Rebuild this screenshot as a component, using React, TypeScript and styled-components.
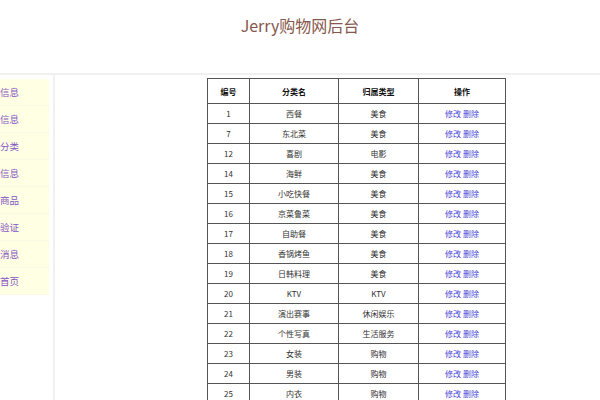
import styled, { createGlobalStyle } from "styled-components";

const GlobalStyle = createGlobalStyle`
  html, body {
    margin: 0;
    padding: 0;
    background: #fff;
    overflow: hidden;
  }
  body {
    font-family: "Noto Sans CJK SC", "Noto Sans", sans-serif;
  }
`;

const MENU = [
  "用户信息",
  "商家信息",
  "商品分类",
  "订单信息",
  "审核商品",
  "实名验证",
  "系统消息",
  "返回首页",
];

const ROWS: [number, string, string][] = [
  [1, "西餐", "美食"],
  [7, "东北菜", "美食"],
  [12, "喜剧", "电影"],
  [14, "海鲜", "美食"],
  [15, "小吃快餐", "美食"],
  [16, "京菜鲁菜", "美食"],
  [17, "自助餐", "美食"],
  [18, "香锅烤鱼", "美食"],
  [19, "日韩料理", "美食"],
  [20, "KTV", "KTV"],
  [21, "演出赛事", "休闲娱乐"],
  [22, "个性写真", "生活服务"],
  [23, "女装", "购物"],
  [24, "男装", "购物"],
  [25, "内衣", "购物"],
];

const COLS = [
  { title: "编号", width: 42 },
  { title: "分类名", width: 89 },
  { title: "归属类型", width: 80 },
  { title: "操作", width: 87 },
];

export default function App() {
  return (
    <Page>
      <GlobalStyle />
      <Header>
        <Title>Jerry购物网后台</Title>
      </Header>
      <Body>
        <Sidebar>
          {MENU.map((m) => (
            <MenuItem key={m}>{m}</MenuItem>
          ))}
        </Sidebar>
        <Main>
          <Table>
            <colgroup>
              {COLS.map((c) => (
                <col key={c.title} style={{ width: c.width }} />
              ))}
            </colgroup>
            <thead>
              <tr>
                {COLS.map((c) => (
                  <Th key={c.title}>{c.title}</Th>
                ))}
              </tr>
            </thead>
            <tbody>
              {ROWS.map(([id, name, type]) => (
                <tr key={id}>
                  <Td>{id}</Td>
                  <Td>{name}</Td>
                  <Td>{type}</Td>
                  <Td>
                    <Action href="#">修改</Action> <Action href="#">删除</Action>
                  </Td>
                </tr>
              ))}
            </tbody>
          </Table>
        </Main>
      </Body>
    </Page>
  );
}

const Page = styled.div`
  width: 600px;
  height: 400px;
  overflow: hidden;
`;

const Header = styled.div`
  height: 73px;
  display: flex;
  justify-content: center;
  align-items: flex-start;
`;

const Title = styled.h1`
  margin: 14px 0 0;
  font-size: 16px;
  font-weight: normal;
  color: #86584c;
  line-height: 22px;
`;

const Body = styled.div`
  display: flex;
  border-top: 2px solid #f0f0f0;
  height: 327px;
`;

const Sidebar = styled.div`
  width: 53px;
  flex: none;
  border-right: 2px solid #f0f0f0;
  padding-top: 4px;
  overflow: hidden;
`;

const MenuItem = styled.div`
  width: 49px;
  height: 26px;
  border-bottom: 1px solid #fbf9e6;
  background: #ffffe3;
  color: #8656c6;
  font-size: 9.5px;
  line-height: 27px;
  white-space: nowrap;
  text-indent: -19px;
`;

const Main = styled.div`
  flex: 1;
  padding: 3px 0 0 152px;
`;

const Table = styled.table`
  border-collapse: collapse;
  table-layout: fixed;
  width: 299px;
  border: 1px solid #555;
`;

const Th = styled.th`
  height: 24px;
  padding: 0;
  border: 1px solid #555;
  font-size: 8px;
  font-weight: bold;
  color: #111;
  text-align: center;
`;

const Td = styled.td`
  height: 19px;
  padding: 0;
  border: 1px solid #555;
  font-size: 8px;
  color: #333;
  text-align: center;
`;

const Action = styled.a`
  color: #4a48d6;
  text-decoration: none;
`;
